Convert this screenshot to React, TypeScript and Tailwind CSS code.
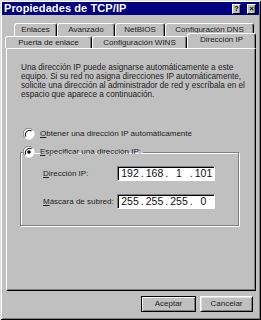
import React from "react"

const raised =
  "border-t border-l border-t-white border-l-white border-r border-r-black shadow-[inset_-1px_0_0_#808080]"

function Tab({ label, w, selected = false }: { label: string; w: number; selected?: boolean }) {
  return (
    <div
      className={`${raised} rounded-t-[3px] bg-[#c0c0c0] flex items-center justify-center text-[8px] text-[#222] ${
        selected ? "relative z-10 h-[15px] -mt-[3px] pb-[2px]" : "h-full"
      }`}
      style={{ width: w }}
    >
      {label}
    </div>
  )
}

function Radio({ checked = false }: { checked?: boolean }) {
  return (
    <svg width="12" height="12" viewBox="0 0 12 12" className="shrink-0">
      <circle cx="6" cy="6" r="5.5" fill="#fff" stroke="#dfdfdf" />
      <path d="M1.8 9.6 A5.5 5.5 0 0 1 9.6 1.8" stroke="#808080" fill="none" />
      <path d="M2.8 8.6 A4.3 4.3 0 0 1 8.6 2.8" stroke="#000" fill="none" />
      {checked && <circle cx="6" cy="6" r="1.8" fill="#000" />}
    </svg>
  )
}

function IpBox({ parts }: { parts: string[] }) {
  return (
    <div className="w-[98px] h-[15px] bg-white border-t border-l border-[#808080] border-r border-b border-r-white border-b-white shadow-[inset_1px_1px_0_#000] flex items-center pl-[3px] text-[10.5px] text-[#111]">
      {parts.map((p, i) => (
        <React.Fragment key={i}>
          {i > 0 && <span className="w-[6.5px] text-center">.</span>}
          <span className="w-[18px] text-center">{p}</span>
        </React.Fragment>
      ))}
    </div>
  )
}

export default function App() {
  return (
    <div className="w-[261px] h-[320px] bg-[#c0c0c0] font-['Liberation_Sans',Arial,sans-serif] shadow-[inset_1px_1px_0_#dfdfdf,inset_-1px_-1px_0_#000,inset_2px_2px_0_#fff,inset_-2px_-2px_0_#808080] flex flex-col overflow-hidden">
      {/* Title bar */}
      <div className="mt-[2px] mx-[2px] h-[13px] bg-[#000080] flex items-center justify-between pl-[2px] pr-[3px]">
        <span className="text-white font-bold text-[11px] leading-none tracking-[0.1px]">Propiedades de TCP/IP</span>
        <div className="flex gap-[6px]">
          <div className={`${raised} border-b border-b-black w-[9px] h-[10px] bg-[#c0c0c0] flex items-center justify-center text-[7px] font-bold leading-none`}>
            ?
          </div>
          <div className={`${raised} border-b border-b-black w-[9px] h-[10px] bg-[#c0c0c0] flex items-center justify-center text-[8px] font-bold leading-none`}>
            ×
          </div>
        </div>
      </div>

      {/* Tabs */}
      <div className="mt-[8px] h-[13px] flex pl-[14px]">
        <Tab label="Enlaces" w={43} />
        <Tab label="Avanzado" w={58} />
        <Tab label="NetBIOS" w={50} />
        <Tab label="Configuración DNS" w={89} />
      </div>
      <div className="h-[12px] flex pl-[5px]">
        <Tab label="Puerta de enlace" w={87} />
        <Tab label="Configuración WINS" w={95} />
        <Tab label="Dirección IP" w={69} selected />
      </div>

      {/* Panel */}
      <div className="ml-[6px] w-[250px] h-[243px] border-t border-l border-white border-r border-b border-r-black border-b-black shadow-[inset_-1px_-1px_0_#808080] flex flex-col pl-[14px] pt-[14px] text-[#222]">
        <p className="text-[8.2px] leading-[9px]">
          Una dirección IP puede asignarse automáticamente a este
          <br />
          equipo. Si su red no asigna direcciones IP automáticamente,
          <br />
          solicite una dirección al administrador de red y escríbala en el
          <br />
          espacio que aparece a continuación.
        </p>

        <div className="mt-[29px] ml-[2px] flex items-center gap-[5px] text-[8px] h-[12px]">
          <Radio />
          <span>
            <u>O</u>btener una dirección IP automáticamente
          </span>
        </div>

        <fieldset className="mt-[6px] -ml-[1px] w-[219px] h-[80px] border border-[#808080] shadow-[1px_1px_0_#fff,inset_1px_1px_0_#fff]">
          <legend className="ml-[2px] pr-[2px] flex items-center gap-[5px] text-[8px] h-[12px]">
            <Radio checked />
            <span>
              <u>E</u>specificar una dirección IP:
            </span>
          </legend>
          <div className="mt-[8px] pl-[22px] flex items-center text-[8px]">
            <span className="w-[74px]">
              <u>D</u>irección IP:
            </span>
            <IpBox parts={["192", "168", "1", "101"]} />
          </div>
          <div className="mt-[13px] pl-[22px] flex items-center text-[8px]">
            <span className="w-[74px]">
              <u>M</u>áscara de subred:
            </span>
            <IpBox parts={["255", "255", "255", "0"]} />
          </div>
        </fieldset>
      </div>

      {/* Buttons */}
      <div className="mt-[5px] flex justify-end gap-[4px] pr-[8px]">
        <button className="w-[55px] h-[16px] border border-black bg-[#c0c0c0] shadow-[inset_1px_1px_0_#fff,inset_-1px_-1px_0_#808080] text-[8px] text-[#222]">
          Aceptar
        </button>
        <button className="w-[53px] h-[16px] border-t border-l border-white border-r border-b border-r-black border-b-black bg-[#c0c0c0] shadow-[inset_1px_1px_0_#dfdfdf,inset_-1px_-1px_0_#808080] text-[8px] text-[#222]">
          Cancelar
        </button>
      </div>
    </div>
  )
}
